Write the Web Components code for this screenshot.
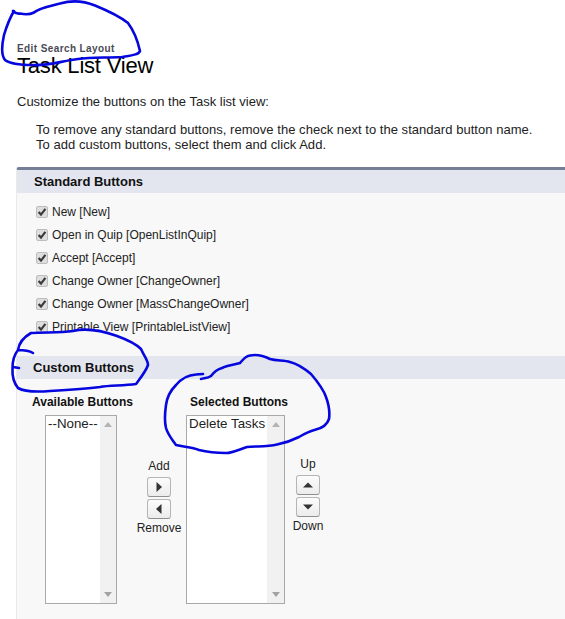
<!DOCTYPE html>
<html>
<head>
<meta charset="utf-8">
<title>Task List View</title>
<style>
	html, body { margin: 0; padding: 0; background: #fff; }
	body {
		font-family: "Liberation Sans", Arial, sans-serif;
		color: #111;
		width: 565px;
		height: 619px;
		overflow: hidden;
		position: relative;
	}
</style>
</head>
<body>
<page-header parent-title="Edit Search Layout" page-title="Task List View">
	<p class="intro">Customize the buttons on the Task list view:</p>
	<p class="hint">To remove any standard buttons, remove the check next to the standard button name.<br>To add custom buttons, select them and click Add.</p>
</page-header>

<edit-panel>
	<panel-section heading="Standard Buttons" kind="first">
		<check-row>New [New]</check-row>
		<check-row>Open in Quip [OpenListInQuip]</check-row>
		<check-row>Accept [Accept]</check-row>
		<check-row>Change Owner [ChangeOwner]</check-row>
		<check-row>Change Owner [MassChangeOwner]</check-row>
		<check-row>Printable View [PrintableListView]</check-row>
	</panel-section>
	<panel-section heading="Custom Buttons">
		<duelling-lists></duelling-lists>
	</panel-section>
</edit-panel>

<pen-scribble></pen-scribble>

<script>
const html = (strings, ...expressions) => {
	let template = document.createElement('template');
	template.innerHTML = strings.reduce(
		(result, string, index) => result + string + (expressions[index] ?? ''), ''
	);
	return template
}

/**
 * PageHeader
 */

const pageHeaderTemplate = html`
	<style>
		:host {
			display: block;
			height: 167px;
			padding: 43px 0 0 17px;
			box-sizing: border-box;
		}
		.parent {
			font-size: 10px;
			font-weight: bold;
			letter-spacing: 0.4px;
			line-height: 11px;
			color: #4a4a56;
		}
		h1 {
			margin: 0;
			font-size: 22px;
			font-weight: normal;
			line-height: 24px;
			letter-spacing: -0.2px;
			color: #000;
		}
		::slotted(p) {
			margin: 0;
			font-size: 13px;
			line-height: 15px;
			color: #222;
		}
		::slotted(.intro) {
			margin-top: 16px;
		}
		::slotted(.hint) {
			margin-top: 13px;
			margin-left: 19px;
			letter-spacing: 0.035px;
		}
	</style>
	<div class="parent"></div>
	<h1></h1>
	<slot></slot>
`;

class PageHeader extends HTMLElement {
	constructor() {
		super();
		this.attachShadow({mode: 'open'}).appendChild(
			pageHeaderTemplate.content.cloneNode(true)
		);
	}

	connectedCallback() {
		this.shadowRoot.querySelector('.parent').textContent = this.getAttribute('parent-title');
		this.shadowRoot.querySelector('h1').textContent = this.getAttribute('page-title');
	}
}

customElements.define('page-header', PageHeader);

/**
 * EditPanel
 */

const editPanelTemplate = html`
	<style>
		:host {
			display: block;
			margin-left: 16px;
			height: 452px;
			background: #f8f8f8;
			border-top: 3px solid #747e96;
			border-left: 1px solid #eaeaea;
			border-top-left-radius: 3px;
		}
	</style>
	<slot></slot>
`;

class EditPanel extends HTMLElement {
	constructor() {
		super();
		this.attachShadow({mode: 'open'}).appendChild(
			editPanelTemplate.content.cloneNode(true)
		);
	}
}

customElements.define('edit-panel', EditPanel);

/**
 * PanelSection
 */

const panelSectionTemplate = html`
	<style>
		:host {
			display: block;
		}
		h3 {
			margin: 0;
			height: 23px;
			padding-left: 16px;
			font-size: 13px;
			line-height: 23px;
			font-weight: bold;
			color: #111;
			background: #e3e6ef;
		}
		.body {
			padding: 7px 0 0 19px;
			height: 156px;
		}
		:host([kind="first"]) h3 {
			padding-left: 17px;
		}
		:host(:not([kind="first"])) .body {
			height: auto;
			padding: 0;
		}
	</style>
	<h3></h3>
	<div class="body"><slot></slot></div>
`;

class PanelSection extends HTMLElement {
	constructor() {
		super();
		this.attachShadow({mode: 'open'}).appendChild(
			panelSectionTemplate.content.cloneNode(true)
		);
	}

	connectedCallback() {
		this.shadowRoot.querySelector('h3').textContent = this.getAttribute('heading');
	}
}

customElements.define('panel-section', PanelSection);

/**
 * CheckRow
 */

const checkRowTemplate = html`
	<style>
		:host {
			display: flex;
			align-items: center;
			gap: 4px;
			height: 23px;
			font-size: 12px;
			color: #222;
		}
		.box {
			width: 12px;
			height: 12px;
			box-sizing: border-box;
			border: 1px solid #bdbdbd;
			border-radius: 2px;
			background: #dedede;
			display: flex;
		}
		svg {
			width: 10px;
			height: 10px;
		}
	</style>
	<span class="box">
		<svg viewBox="0 0 10 10"><path d="M1.6 5 L4 7.6 L8.4 1.8" fill="none" stroke="#3a3a3a" stroke-width="2.2"/></svg>
	</span>
	<slot></slot>
`;

class CheckRow extends HTMLElement {
	constructor() {
		super();
		this.attachShadow({mode: 'open'}).appendChild(
			checkRowTemplate.content.cloneNode(true)
		);
	}
}

customElements.define('check-row', CheckRow);

/**
 * ListBox
 */

const listBoxTemplate = html`
	<style>
		:host {
			display: flex;
			flex-direction: column;
			align-items: flex-start;
		}
		.label {
			font-size: 12px;
			font-weight: bold;
			line-height: 14px;
			color: #111;
			margin-bottom: 6px;
			white-space: nowrap;
		}
		.box {
			display: flex;
			height: 189px;
			box-sizing: border-box;
			border: 1px solid #a9a9a9;
			background: #fff;
		}
		.items {
			flex: 1;
			padding: 0 2px;
			font-size: 13.33px;
			line-height: 15px;
			color: #222;
			white-space: nowrap;
		}
		.bar {
			width: 17px;
			background: #f1f1f1;
			display: flex;
			flex-direction: column;
			justify-content: space-between;
			align-items: center;
			padding: 6px 0;
			box-sizing: border-box;
		}
		.bar svg {
			width: 8px;
			height: 5px;
			display: block;
		}
	</style>
	<div class="label"></div>
	<div class="box">
		<div class="items"><slot></slot></div>
		<div class="bar">
			<svg viewBox="0 0 8 5"><path d="M4 0 L8 5 H0 Z" fill="#b4b4b4"/></svg>
			<svg viewBox="0 0 8 5"><path d="M0 0 H8 L4 5 Z" fill="#a3a3a3"/></svg>
		</div>
	</div>
`;

class ListBox extends HTMLElement {
	constructor() {
		super();
		this.attachShadow({mode: 'open'}).appendChild(
			listBoxTemplate.content.cloneNode(true)
		);
	}

	connectedCallback() {
		const label = this.shadowRoot.querySelector('.label');
		label.textContent = this.getAttribute('label');
		label.style.marginLeft = `${this.getAttribute('label-shift') ?? 0}px`;
		this.shadowRoot.querySelector('.box').style.width = `${this.getAttribute('box-width')}px`;
	}
}

customElements.define('list-box', ListBox);

/**
 * ArrowButton
 */

const arrowPaths = {
	right: 'M-2.5 -5 L3 0 L-2.5 5 Z',
	left: 'M2.5 -5 L-3 0 L2.5 5 Z',
	up: 'M-5 2.5 L0 -2.5 L5 2.5 Z',
	down: 'M-5 -2.5 L5 -2.5 L0 2.5 Z',
};

const arrowButtonTemplate = html`
	<style>
		:host {
			display: block;
			width: 24px;
			height: 20px;
			box-sizing: border-box;
			border: 1px solid #b5b5b5;
			border-bottom-color: #8f8f8f;
			border-radius: 3px;
			background: linear-gradient(#fcfcfc, #ececec);
		}
		svg {
			display: block;
			width: 22px;
			height: 18px;
		}
	</style>
	<svg viewBox="-11 -9 22 18"><path fill="#333"></path></svg>
`;

class ArrowButton extends HTMLElement {
	constructor() {
		super();
		this.attachShadow({mode: 'open'}).appendChild(
			arrowButtonTemplate.content.cloneNode(true)
		);
	}

	connectedCallback() {
		this.shadowRoot.querySelector('path').setAttribute('d', arrowPaths[this.getAttribute('direction')]);
	}
}

customElements.define('arrow-button', ArrowButton);

/**
 * ButtonStack
 */

const buttonStackTemplate = html`
	<style>
		:host {
			display: flex;
			flex-direction: column;
			align-items: center;
			gap: 2px;
			font-size: 12px;
			line-height: 14px;
			color: #222;
		}
		.top { margin-bottom: 2px; }
	</style>
	<div class="top"></div>
	<slot></slot>
	<div class="bottom"></div>
`;

class ButtonStack extends HTMLElement {
	constructor() {
		super();
		this.attachShadow({mode: 'open'}).appendChild(
			buttonStackTemplate.content.cloneNode(true)
		);
	}

	connectedCallback() {
		this.shadowRoot.querySelector('.top').textContent = this.getAttribute('top-label');
		this.shadowRoot.querySelector('.bottom').textContent = this.getAttribute('bottom-label');
	}
}

customElements.define('button-stack', ButtonStack);

/**
 * DuellingLists
 */

const duellingListsTemplate = html`
	<style>
		:host {
			display: grid;
			grid-template-columns: 72px 69px 99px 46px;
			padding: 16px 0 0 28px;
			align-items: start;
		}
		.add { margin: 64px 0 0 15px; }
		.order { margin-top: 62px; }
		list-box { min-width: 0; }
	</style>
	<list-box label="Available Buttons" label-shift="-13" box-width="72">--None--</list-box>
	<button-stack class="add" top-label="Add" bottom-label="Remove">
		<arrow-button direction="right"></arrow-button>
		<arrow-button direction="left"></arrow-button>
	</button-stack>
	<list-box label="Selected Buttons" label-shift="4" box-width="99">Delete Tasks</list-box>
	<button-stack class="order" top-label="Up" bottom-label="Down">
		<arrow-button direction="up"></arrow-button>
		<arrow-button direction="down"></arrow-button>
	</button-stack>
`;

class DuellingLists extends HTMLElement {
	constructor() {
		super();
		this.attachShadow({mode: 'open'}).appendChild(
			duellingListsTemplate.content.cloneNode(true)
		);
	}
}

customElements.define('duelling-lists', DuellingLists);

/**
 * PenScribble: the hand drawn blue circles lying over the page.
 */

const penScribbleTemplate = html`
	<style>
		:host {
			position: absolute;
			left: 0;
			top: 0;
			pointer-events: none;
		}
		svg {
			display: block;
		}
		path {
			fill: none;
			stroke: #0606de;
			stroke-width: 2.6;
			stroke-linecap: round;
			stroke-linejoin: round;
		}
	</style>
	<svg width="565" height="619" viewBox="0 0 565 619">
		<path d="M13 11 C15 13 17 14 20 13.5 C27 15 31 14 34 12.5 C39 8 50 6 60 3.5 C72 0 84 1 95 5.5 C106 10 118 15 128 23 C134 31 138 42 140 51 C139 54 135 55 122 57 C105 58 92 57 78 59 C62 61 47 66 33 65 C22 65 10 64 5 60 C1 55 2 44 4 35 C7 25 11 16 14 11"/>
		<path d="M33 353 C28 350 23 350 18 350 C19 343 24 337 31 333 C45 332 60 333 73 331 C85 328 100 330 117 336 C128 340 136 344 141 349 C144 356 148 360 148 365 C146 371 142 376 136 384 C122 386 110 385 100 387 C85 389 68 390 50 391 C38 392 25 392 18 388 C14 383 12 376 12.5 368 C12.5 360 14 355 18 350 M13 367 L19 368"/>
		<path d="M201 379 C205 378 208 378 211 376 C214 372 218 369 222 368 C228 365 234 365 240 363 C243 360 245 356 250 355.5 C257 354 264 356 270 359 C277 361 284 360 290 362 C298 364 305 369 311 374 C317 381 323 388 326 397 C329 405 330 412 329 419 C327 425 322 428 316 429.500 C310 431 304 434 299 437 C293 440 285 443 277 444.500 C267 447 256 446 247 447 C240 449 233 453 226 453 C216 453 207 452 199 450 C192 447 184 447 176 445 C172 439 168 435 166 428 C164 420 165 412 166 405 C167 397 171 390 176 385 C181 379 188 375 196 374.500 C198 374 201 374 203 374"/>
	</svg>
`;

class PenScribble extends HTMLElement {
	constructor() {
		super();
		this.attachShadow({mode: 'open'}).appendChild(
			penScribbleTemplate.content.cloneNode(true)
		);
	}
}

customElements.define('pen-scribble', PenScribble);
</script>
</body>
</html>
